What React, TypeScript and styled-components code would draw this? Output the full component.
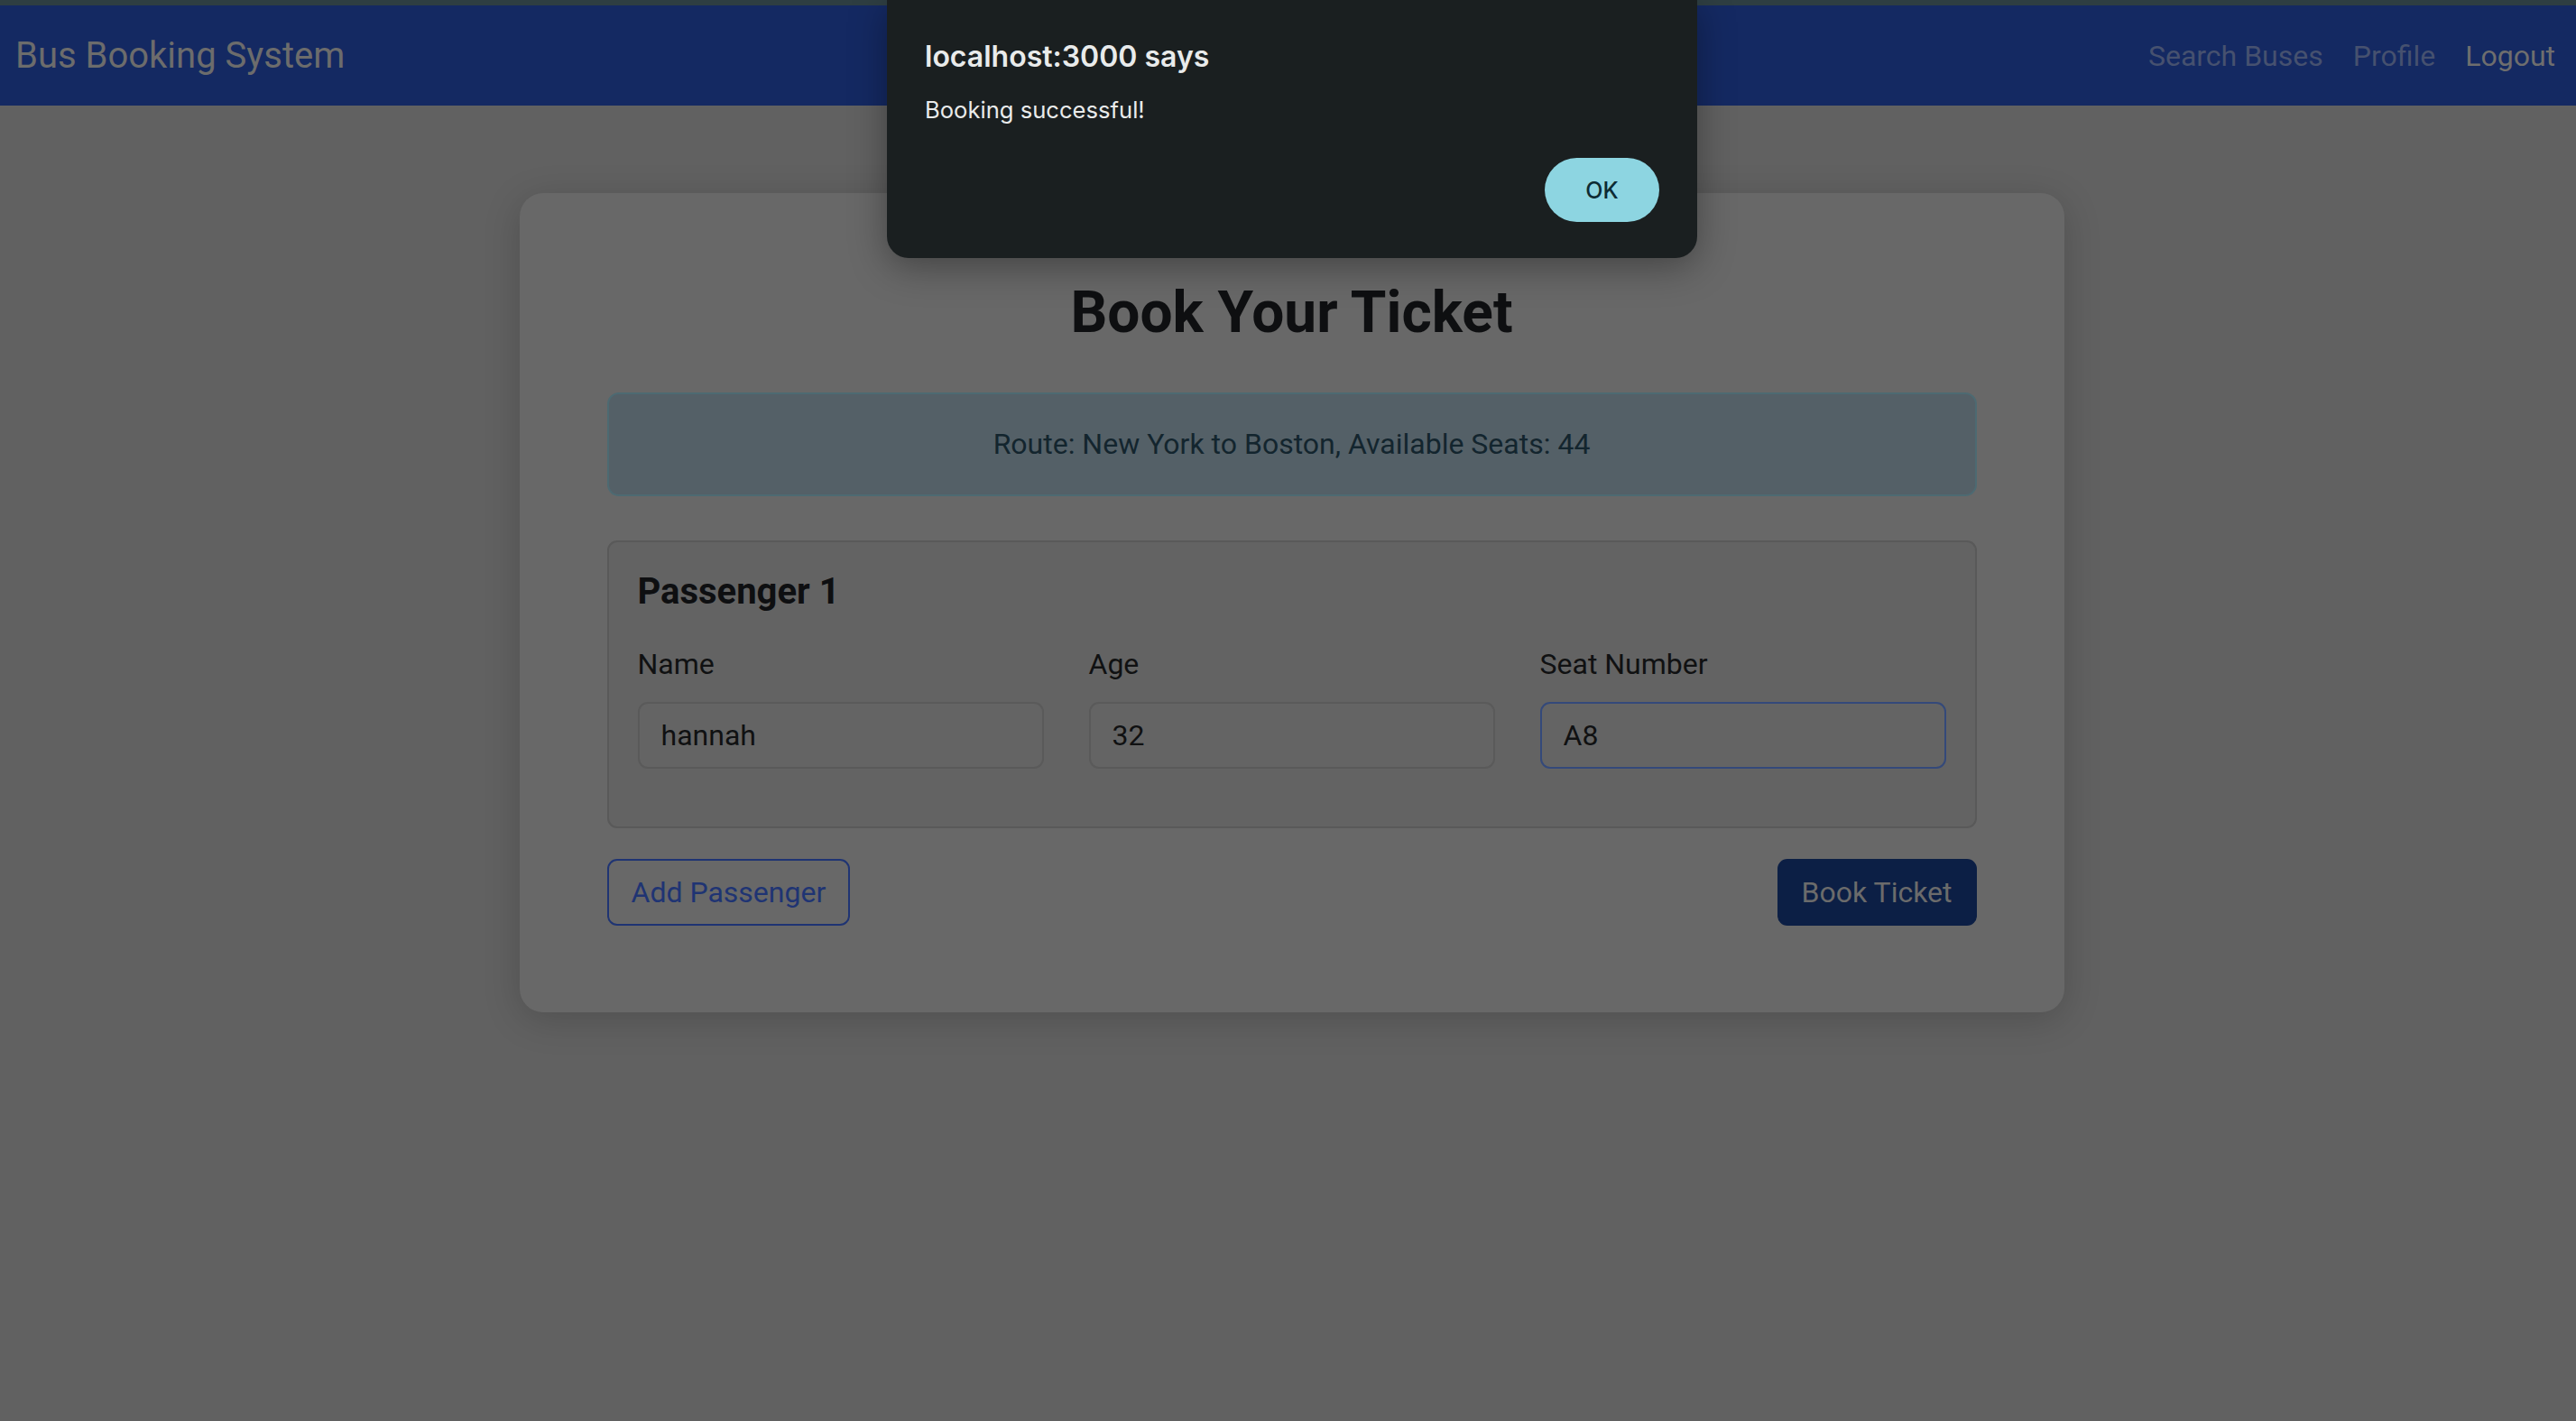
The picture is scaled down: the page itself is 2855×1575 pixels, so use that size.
import React, { useState } from "react";
import styled, { createGlobalStyle } from "styled-components";

const GlobalStyle = createGlobalStyle`
  html, body {
    margin: 0;
    padding: 0;
    background: #616161;
    font-family: Roboto, "Liberation Sans", Arial, sans-serif;
  }
  * { box-sizing: border-box; }
`;

const TopStrip = styled.div`
  height: 6px;
  background: #2e3e42;
`;

const Navbar = styled.nav`
  height: 111px;
  background: #142962;
  display: flex;
  align-items: center;
  justify-content: space-between;
  padding: 0 23px 0 17px;
`;

const Brand = styled.a`
  font-size: 40px;
  color: #6c6c6c;
  text-decoration: none;
  line-height: 1;
`;

const NavLinks = styled.div`
  display: flex;
  gap: 33px;
`;

const NavLink = styled.a<{ $active?: boolean }>`
  font-size: 32px;
  color: ${(p) => (p.$active ? "#6e6e6e" : "#46516f")};
  text-decoration: none;
`;

const Main = styled.main`
  display: flex;
  justify-content: center;
  align-items: flex-start;
  padding: 97px 0 200px 8px;
  min-height: 1458px;
`;

const Card = styled.div`
  width: 1712px;
  background: #686868;
  border-radius: 26px;
  padding: 95px 97px 96px;
  box-shadow: 0 8px 40px rgba(0, 0, 0, 0.18);
  display: flex;
  flex-direction: column;
`;

const Title = styled.h2`
  margin: 0 0 49px;
  font-size: 64px;
  font-weight: 700;
  line-height: 1.2;
  text-align: center;
  color: #0e0f11;
`;

const RouteInfo = styled.div`
  border: 2px solid #4d6a72;
  background: #546067;
  border-radius: 13px;
  padding: 31px 32px 32px;
  text-align: center;
  font-size: 32px;
  line-height: 1.5;
  color: #13252e;
  margin-bottom: 49px;
`;

const PassengerBox = styled.div`
  border: 2px solid #595959;
  background: #636363;
  border-radius: 11px;
  padding: 31px 32px 64px;
  margin-bottom: 34px;
`;

const PassengerTitle = styled.h4`
  margin: 0 0 32px;
  font-size: 40px;
  font-weight: 700;
  line-height: 1.2;
  color: #0e0f11;
`;

const FieldRow = styled.div`
  display: grid;
  grid-template-columns: repeat(3, minmax(0, 1fr));
  gap: 50px;
`;

const Field = styled.div`
  display: flex;
  flex-direction: column;
  min-width: 0;
`;

const Label = styled.label`
  font-size: 32px;
  line-height: 1.5;
  color: #101112;
  margin-bottom: 18px;
`;

const Input = styled.input<{ $focused?: boolean }>`
  width: 100%;
  min-width: 0;
  height: 74px;
  border: 2px solid ${(p) => (p.$focused ? "#34497a" : "#5a5a5a")};
  background: #646464;
  border-radius: 11px;
  padding: 0 24px;
  font-family: Roboto, "Liberation Sans", Arial, sans-serif;
  font-size: 32px;
  color: #101112;
  outline: none;
`;

const Actions = styled.div`
  display: flex;
  justify-content: space-between;
`;

const Button = styled.button<{ $solid?: boolean }>`
  height: 74px;
  padding: 0 25px;
  border-radius: 11px;
  font-family: Roboto, "Liberation Sans", Arial, sans-serif;
  font-size: 32px;
  border: 2px solid ${(p) => (p.$solid ? "#0c1f45" : "#1f3473")};
  background: ${(p) => (p.$solid ? "#0c1f45" : "transparent")};
  color: ${(p) => (p.$solid ? "#6b6b6b" : "#1f3473")};
  cursor: pointer;
`;

const Dialog = styled.div`
  position: absolute;
  top: 0;
  left: 983px;
  width: 898px;
  height: 286px;
  background: #1a1f20;
  border-radius: 0 0 24px 24px;
  box-shadow: 0 10px 40px rgba(0, 0, 0, 0.35);
  padding: 44px 42px 40px;
  display: flex;
  flex-direction: column;
  font-family: Inter, "Noto Sans", sans-serif;
`;

const DialogTitle = styled.div`
  font-size: 32px;
  font-weight: 600;
  line-height: 1.2;
  color: #e9ebeb;
  margin-bottom: 25px;
`;

const DialogMessage = styled.div`
  font-size: 25.6px;
  line-height: 1.2;
  color: #e9ebeb;
`;

const DialogActions = styled.div`
  margin-top: auto;
  display: flex;
  justify-content: flex-end;
`;

const OkButton = styled.button`
  width: 127px;
  height: 71px;
  border: none;
  border-radius: 36px;
  background: #8dd5e1;
  color: #0d2b33;
  font-family: Inter, "Noto Sans", sans-serif;
  font-size: 25px;
  font-weight: 500;
`;

const fields = [
  { label: "Name", value: "hannah" },
  { label: "Age", value: "32" },
  { label: "Seat Number", value: "A8", focused: true },
];

export default function App() {
  const [values, setValues] = useState(fields.map((f) => f.value));

  return (
    <>
      <GlobalStyle />
      <TopStrip />
      <Navbar>
        <Brand href="#">Bus Booking System</Brand>
        <NavLinks>
          <NavLink href="#">Search Buses</NavLink>
          <NavLink href="#">Profile</NavLink>
          <NavLink href="#" $active>
            Logout
          </NavLink>
        </NavLinks>
      </Navbar>
      <Main>
        <Card>
          <Title>Book Your Ticket</Title>
          <RouteInfo>Route: New York to Boston, Available Seats: 44</RouteInfo>
          <PassengerBox>
            <PassengerTitle>Passenger 1</PassengerTitle>
            <FieldRow>
              {fields.map((f, i) => (
                <Field key={f.label}>
                  <Label>{f.label}</Label>
                  <Input
                    $focused={f.focused}
                    value={values[i]}
                    onChange={(e) => {
                      const next = [...values];
                      next[i] = e.target.value;
                      setValues(next);
                    }}
                  />
                </Field>
              ))}
            </FieldRow>
          </PassengerBox>
          <Actions>
            <Button>Add Passenger</Button>
            <Button $solid>Book Ticket</Button>
          </Actions>
        </Card>
      </Main>
      <Dialog>
        <DialogTitle>localhost:3000 says</DialogTitle>
        <DialogMessage>Booking successful!</DialogMessage>
        <DialogActions>
          <OkButton>OK</OkButton>
        </DialogActions>
      </Dialog>
    </>
  );
}
